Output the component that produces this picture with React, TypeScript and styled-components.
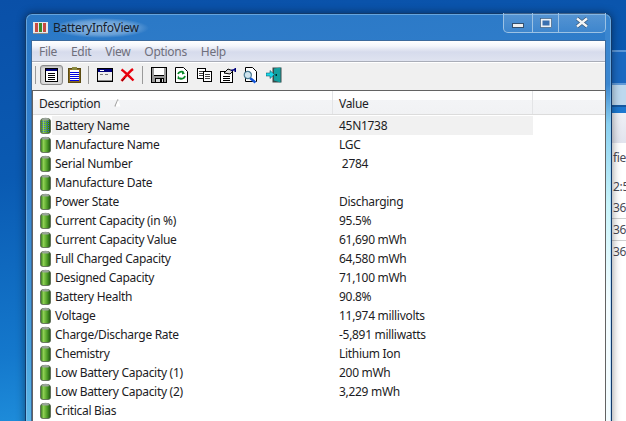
import React from 'react'
import styled, { createGlobalStyle } from 'styled-components'

const GlobalStyle = createGlobalStyle`
  html, body {
    margin: 0;
    padding: 0;
    background: #0a55ab;
  }
`

const Desktop = styled.div`
  position: relative;
  width: 626px;
  height: 421px;
  overflow: hidden;
  font-family: "Noto Sans", "Open Sans", sans-serif;
  font-size: 12px;
  letter-spacing: -0.3px;
  color: #1c1c24;
  background: linear-gradient(172deg, #0a50a8 0%, #0a5ab2 35%, #1478cc 70%, #2aa4ea 100%);
`

const BackWindow = styled.div`
  position: absolute;
  left: 612px;
  top: 50px;
  width: 60px;
  height: 380px;
  display: flex;
  flex-direction: column;
  background: #ffffff;
`

const BackBand = styled.div`
  height: 93px;
  flex: none;
  background: linear-gradient(
    #5a95d6 0 2px,
    #1a68c0 2px 33px,
    #5f9ad8 33px 35px,
    #bcd8ee 35px 55px,
    #14589f 55px 57px,
    #1c78d0 57px 63px,
    #eef0f6 63px,
    #e2e4ee 93px
  );
`

const BackBody = styled.div`
  flex: 1;
  color: #4a4a55;
  padding-top: 5px;
`

const BackCell = styled.div<{ $h: number; $line?: boolean }>`
  height: ${(p) => p.$h}px;
  line-height: ${(p) => p.$h}px;
  padding-left: 1px;
  white-space: nowrap;
  border-bottom: ${(p) => (p.$line ? '1px solid #d0d0d0' : 'none')};
`

const Win = styled.div`
  position: absolute;
  left: 25px;
  top: 13px;
  width: 587px;
  height: 430px;
  box-sizing: border-box;
  display: flex;
  flex-direction: column;
  padding: 0 6px;
  border: 1px solid #123a6a;
  border-radius: 7px 7px 0 0;
  box-shadow: 0 0 9px rgba(0, 0, 0, 0.45), inset 0 0 0 1px rgba(150, 200, 240, 0.55);
  background:
    linear-gradient(#3a86d0 0 70px, #8ad0f0 110px, #c8f4fa 190px, #f4fdff 290px) right / 6px 100% no-repeat,
    linear-gradient(175deg, #2a78c6 0%, #3582ce 35%, #4aa4de 70%, #6cc8f0 100%);
`

const TitleBar = styled.div`
  height: 27px;
  flex: none;
  display: flex;
  align-items: center;
  gap: 5px;
  padding-left: 1px;
`

const TitleText = styled.span`
  color: #14202e;
  line-height: 16px;
  background: radial-gradient(closest-side, rgba(255, 255, 255, 0.5), rgba(255, 255, 255, 0.28) 70%, transparent);
  padding: 2px 10px 2px 0;
`

const Caption = styled.div`
  position: absolute;
  top: -1px;
  right: 5px;
  display: flex;
  height: 19px;
  border: 1px solid #9cc2e4;
  border-top: none;
  border-radius: 0 0 5px 5px;
  background: linear-gradient(rgba(255, 255, 255, 0.2), rgba(255, 255, 255, 0.08));
`

const CapButton = styled.div<{ $w: number; $last?: boolean; $low?: boolean }>`
  width: ${(p) => p.$w}px;
  display: flex;
  align-items: ${(p) => (p.$low ? 'flex-end' : 'center')};
  padding-bottom: ${(p) => (p.$low ? '4px' : '0')};
  box-sizing: border-box;
  justify-content: center;
  border-right: ${(p) => (p.$last ? 'none' : '1px solid #9cc2e4')};
`

const Client = styled.div`
  flex: 1;
  display: flex;
  flex-direction: column;
  background: #f0f0f0;
  box-shadow: 0 0 0 1px #3c6a9c;
`

const MenuBar = styled.div`
  height: 21px;
  flex: none;
  display: flex;
  align-items: center;
  gap: 14px;
  padding-left: 7px;
  box-sizing: border-box;
  color: #6f6f7c;
  background: linear-gradient(#ffffff 0%, #f4f6fb 25%, #d6dbec 55%, #dfe3f0 100%);
  border-bottom: 1px solid #a9adb8;
`

const ToolBar = styled.div`
  height: 28px;
  flex: none;
  display: flex;
  align-items: center;
  padding-bottom: 3px;
  background: #f0f0f0;
  border-top: 1px solid #ffffff;
  box-sizing: border-box;
`

const ToolSep = styled.div<{ $ml: number }>`
  width: 1px;
  height: 18px;
  background: #9a9a9a;
  margin: 0 4px 0 ${(p) => p.$ml}px;
`

const ToolButton = styled.div<{ $active?: boolean }>`
  width: 23px;
  height: 20px;
  box-sizing: border-box;
  display: flex;
  align-items: center;
  justify-content: center;
  border-radius: 3px;
  border: 1px solid ${(p) => (p.$active ? '#8a8a8a' : 'transparent')};
  background: ${(p) => (p.$active ? '#dcdcdc' : 'transparent')};
  box-shadow: ${(p) => (p.$active ? 'inset 0 1px 2px #b0b0b0' : 'none')};
`

const ListFrame = styled.div`
  flex: 1;
  background: #ffffff;
  border-top: 1px solid #636363;
  border-left: 1px solid #636363;
  border-right: 1px solid #636363;
  margin-right: -1px;
  overflow: hidden;
`

const HeaderRow = styled.div`
  display: flex;
  height: 24px;
  box-sizing: border-box;
  border-bottom: 1px solid #dcdcdc;
  background: linear-gradient(#ffffff 0 9px, #f3f4f6 9px, #f1f2f4 100%);
`

const HeaderCell = styled.div<{ $w: number }>`
  position: relative;
  width: ${(p) => p.$w}px;
  flex: none;
  box-sizing: border-box;
  padding: 3px 0 0 6px;
  line-height: 20px;
  border-right: 1px solid #e3e4e6;
`

const SortMark = styled.svg`
  position: absolute;
  left: 81px;
  top: 8px;
`

const Rows = styled.div`
  padding-top: 1px;
`

const Row = styled.div<{ $selected?: boolean }>`
  display: flex;
  align-items: center;
  height: 19px;
  width: 500px;
  background: ${(p) => (p.$selected ? 'linear-gradient(90deg, #fff 0 19px, #f1f1f1 19px)' : 'transparent')};
`

const IconCell = styled.div`
  width: 22px;
  padding-left: 7px;
  box-sizing: border-box;
  flex: none;
  display: flex;
`

const NameCell = styled.div`
  width: 284px;
  flex: none;
  white-space: nowrap;
`

const ValueCell = styled.div`
  white-space: pre;
`

const Battery = ({ selected }: { selected?: boolean }) => (
  <svg width="11" height="17" viewBox="0 0 11 17">
    <defs>
      <linearGradient id="batt" x1="0" x2="1" y1="0" y2="0">
        <stop offset="0" stopColor="#2f6e1c" />
        <stop offset="0.3" stopColor="#8ed052" />
        <stop offset="0.65" stopColor="#4f9e28" />
        <stop offset="1" stopColor="#1f5212" />
      </linearGradient>
      <pattern id="dith" width="2" height="2" patternUnits="userSpaceOnUse">
        <rect width="1" height="1" fill="#3a68c8" />
      </pattern>
    </defs>
    <path d="M0.5 4Q0.5 2 3 1.5H8Q10.5 2 10.5 4V14.5Q10.5 16.5 8 16.5H3Q0.5 16.5 0.5 14.5Z" fill="url(#batt)" stroke="#55604f" strokeWidth="0.8" />
    <path d="M2 2Q5.5 -0.5 9 2L8.5 3.5H2.5Z" fill="#9aa49a" />
    {selected && <rect x="1" y="4" width="9" height="12" fill="url(#dith)" />}
  </svg>
)

const DocIcon = () => (
  <svg width="13" height="14" viewBox="0 0 13 14" shapeRendering="crispEdges">
    <rect x="0.5" y="0.5" width="12" height="13" fill="#fff" stroke="#000" />
    <rect x="1" y="1" width="11" height="2" fill="#00007b" />
    <path d="M3 5.5H10M3 7.5H10M3 9.5H10M3 11.5H10" stroke="#000" />
  </svg>
)

const ClipIcon = () => (
  <svg width="13" height="16" viewBox="0 0 13 16" shapeRendering="crispEdges">
    <rect x="0.5" y="1.5" width="12" height="14" fill="#8a6a20" stroke="#5a4a10" />
    <rect x="2" y="3" width="9" height="11" fill="#fff" />
    <rect x="4" y="0" width="5" height="3" fill="#8a8a40" />
    <path d="M2 5.5H11M2 7.5H11M2 9.5H11M2 11.5H11M2 13.5H11" stroke="#0000e0" />
  </svg>
)

const WindowIcon = () => (
  <svg width="16" height="14" viewBox="0 0 16 14" shapeRendering="crispEdges">
    <rect x="0.5" y="0.5" width="15" height="13" fill="#eee" stroke="#000" />
    <rect x="1" y="1" width="14" height="3" fill="#00007b" />
    <path d="M3 2.5H7" stroke="#fff" />
    <path d="M3 6.5H6M8 6.5H11" stroke="#777" />
    <path d="M1 12.5H15" stroke="#888" />
  </svg>
)

const CrossIcon = () => (
  <svg width="15" height="14" viewBox="0 0 15 14">
    <path d="M1.5 1.5C5 4 10 9 13.5 12.5M13 1C9 4 5 9 1.5 13" stroke="#e8000c" strokeWidth="2.4" fill="none" />
    <path d="M2 13L5 10" stroke="#700" strokeWidth="1" />
  </svg>
)

const FloppyIcon = () => (
  <svg width="16" height="16" viewBox="0 0 16 16" shapeRendering="crispEdges">
    <rect x="0.5" y="0.5" width="15" height="15" fill="#9a9a9a" stroke="#000" />
    <rect x="3" y="1" width="10" height="7" fill="#fff" />
    <rect x="3" y="7.5" width="10" height="1" fill="#000" />
    <rect x="4" y="11" width="8" height="4" fill="#ddd" stroke="#000" />
    <rect x="9" y="12" width="2" height="3" fill="#000" />
  </svg>
)

const RefreshIcon = () => (
  <svg width="13" height="16" viewBox="0 0 13 16">
    <path d="M0.5 0.5H8.5L12.5 4.5V15.5H0.5Z" fill="#fff" stroke="#000" />
    <path d="M3 7A3.5 3.5 0 0 1 8.5 5.5M10 9A3.5 3.5 0 0 1 4.5 11" stroke="#0a8a2a" strokeWidth="1.8" fill="none" />
    <path d="M7 3.5L10 6.5L7 7.5ZM3 8.5L6 12.5L2.5 12Z" fill="#0a8a2a" />
  </svg>
)

const CopyIcon = () => (
  <svg width="15" height="14" viewBox="0 0 15 14" shapeRendering="crispEdges">
    <rect x="0.5" y="0.5" width="8" height="10" fill="#fff" stroke="#000" />
    <path d="M2 3.5H7M2 5.5H7M2 7.5H7" stroke="#444" />
    <rect x="6.5" y="3.5" width="8" height="10" fill="#fff" stroke="#000" />
    <path d="M8 6.5H13M8 8.5H13M8 10.5H13" stroke="#444" />
  </svg>
)

const PropsIcon = () => (
  <svg width="16" height="15" viewBox="0 0 16 15">
    <rect x="0.5" y="3.5" width="12" height="11" fill="#fff" stroke="#000" />
    <path d="M3 8.5H10M3 10.5H10M3 12.5H10" stroke="#000" />
    <path d="M4 5L8 1L13 3L10 6Z" fill="#ddd" stroke="#000" />
    <path d="M11 2.5L15.5 1.5" stroke="#00007b" strokeWidth="1.4" />
    <rect x="14.5" y="0" width="1.5" height="4" fill="#00007b" />
  </svg>
)

const FindIcon = () => (
  <svg width="15" height="17" viewBox="0 0 15 17">
    <path d="M2.5 0.5H9.5L13.5 4.5V14.5H2.5Z" fill="#fff" stroke="#000" />
    <path d="M7 11L12.5 15.5" stroke="#1456d8" strokeWidth="2.4" />
    <circle cx="4.8" cy="8" r="3.6" fill="#cfe4ee" stroke="#4a7a92" strokeWidth="1.2" />
  </svg>
)

const ExitIcon = () => (
  <svg width="16" height="16" viewBox="0 0 16 16">
    <path d="M6.5 0.5H15.5V15.5H6.5Z" fill="#3a4a4a" />
    <path d="M8 1.5L14.5 0.5V15.5L8 13.5Z" fill="#12a0a0" />
    <rect x="9.5" y="7" width="1.5" height="2" fill="#003030" />
    <path d="M0 6H4V3.5L8.5 7.5L4 11.5V9H0Z" fill="#18d8e8" stroke="#0a4050" strokeWidth="0.5" />
  </svg>
)

const AppIcon = () => (
  <svg width="15" height="12" viewBox="0 0 15 12" shapeRendering="crispEdges">
    <rect x="0" y="0" width="15" height="12" fill="#e8e8e8" />
    <rect x="0" y="11" width="15" height="1" fill="#8a8a8a" />
    <rect x="2" y="1" width="3" height="9" fill="#c84a42" />
    <rect x="6" y="1" width="3" height="9" fill="#3a8a2a" />
    <rect x="10" y="1" width="3" height="9" fill="#c84a42" />
  </svg>
)

const data: [string, string][] = [
  ['Battery Name', '45N1738'],
  ['Manufacture Name', 'LGC'],
  ['Serial Number', ' 2784'],
  ['Manufacture Date', ''],
  ['Power State', 'Discharging'],
  ['Current Capacity (in %)', '95.5%'],
  ['Current Capacity Value', '61,690 mWh'],
  ['Full Charged Capacity', '64,580 mWh'],
  ['Designed Capacity', '71,100 mWh'],
  ['Battery Health', '90.8%'],
  ['Voltage', '11,974 millivolts'],
  ['Charge/Discharge Rate', '-5,891 milliwatts'],
  ['Chemistry', 'Lithium Ion'],
  ['Low Battery Capacity (1)', '200 mWh'],
  ['Low Battery Capacity (2)', '3,229 mWh'],
  ['Critical Bias', ''],
]

export default function App() {
  return (
    <Desktop>
      <GlobalStyle />
      <BackWindow>
        <BackBand />
        <BackBody>
          <BackCell $h={20}>fied</BackCell>
          <BackCell $h={9} />
          <BackCell $h={20}>2:5</BackCell>
          <BackCell $h={21} $line>36</BackCell>
          <BackCell $h={21} $line>36</BackCell>
          <BackCell $h={21}>36</BackCell>
        </BackBody>
      </BackWindow>
      <Win>
        <TitleBar>
          <AppIcon />
          <TitleText>BatteryInfoView</TitleText>
        </TitleBar>
        <Caption>
          <CapButton $w={29} $low>
            <svg width="12" height="5" viewBox="0 0 12 5"><rect x="0.5" y="0.5" width="11" height="4" fill="#f0f0f0" stroke="#35506e" /></svg>
          </CapButton>
          <CapButton $w={26}>
            <svg width="12" height="10" viewBox="0 0 12 10"><rect x="1.5" y="1.5" width="9" height="7" fill="#3a70b0" stroke="#eef2f6" strokeWidth="2" /><rect x="0.5" y="0.5" width="11" height="9" fill="none" stroke="#35506e" strokeWidth="0.6" /></svg>
          </CapButton>
          <CapButton $w={46} $last>
            <svg width="14" height="11" viewBox="0 0 14 11"><path d="M2 1.5L12 9.5M12 1.5L2 9.5" stroke="#35506e" strokeWidth="3.6" /><path d="M2 1.5L12 9.5M12 1.5L2 9.5" stroke="#f2f4f6" strokeWidth="2.4" /></svg>
          </CapButton>
        </Caption>
        <Client>
          <MenuBar>
            <span>File</span>
            <span>Edit</span>
            <span>View</span>
            <span>Options</span>
            <span>Help</span>
          </MenuBar>
          <ToolBar>
            <ToolSep $ml={3} />
            <ToolButton $active><DocIcon /></ToolButton>
            <ToolButton><ClipIcon /></ToolButton>
            <ToolSep $ml={2} />
            <ToolButton><WindowIcon /></ToolButton>
            <ToolButton><CrossIcon /></ToolButton>
            <ToolSep $ml={3} />
            <ToolButton><FloppyIcon /></ToolButton>
            <ToolButton><RefreshIcon /></ToolButton>
            <ToolButton><CopyIcon /></ToolButton>
            <ToolButton><PropsIcon /></ToolButton>
            <ToolButton><FindIcon /></ToolButton>
            <ToolButton><ExitIcon /></ToolButton>
          </ToolBar>
          <ListFrame>
            <HeaderRow>
              <HeaderCell $w={300}>
                Description
                <SortMark width="7" height="8" viewBox="0 0 7 8">
                  <path d="M1 7.5L4 0.5" stroke="#a4a4a4" strokeWidth="1.4" />
                  <path d="M4 1L6.5 7.5H1.5" fill="#fff" />
                </SortMark>
              </HeaderCell>
              <HeaderCell $w={200}>Value</HeaderCell>
            </HeaderRow>
            <Rows>
              {data.map(([name, value], i) => (
                <Row key={name} $selected={i === 0}>
                  <IconCell><Battery selected={i === 0} /></IconCell>
                  <NameCell>{name}</NameCell>
                  <ValueCell>{value}</ValueCell>
                </Row>
              ))}
            </Rows>
          </ListFrame>
        </Client>
      </Win>
    </Desktop>
  )
}
